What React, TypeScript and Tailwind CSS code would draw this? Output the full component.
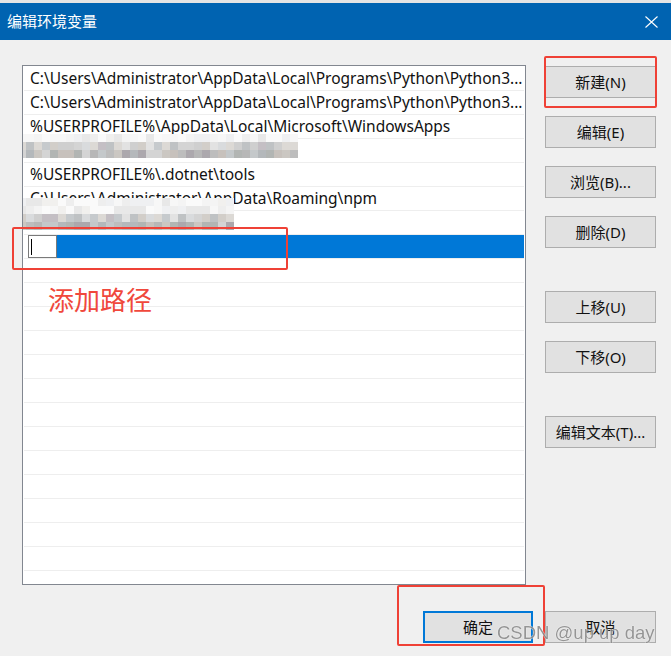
import React from "react";

const FONT = { fontFamily: '"Noto Sans", "Noto Sans CJK SC", sans-serif' };

const PALETTE_LIGHT = ["#f4f4f4", "#fafafa", "#eeeeee", "#f7f7f7", "#e8e8e8", "#f1f0ee", "#eff0f2"];
const PALETTE_MID = ["#d4d4d4", "#c6cacd", "#dcd9d5", "#cfcfcf", "#bfc2c4", "#e2e2e2", "#d2cec9", "#c4bfc4", "#d9dbdd"];
const PALETTE_DARK = ["#bdbdbd", "#b4b8bb", "#cbc7c2", "#aca8ad", "#c4c8ca", "#b7b7b7", "#d4d4d4", "#b2b5b3", "#c7c1bc"];

function rand(seed: number) {
  let s = seed;
  return () => {
    s = (s * 9301 + 49297) % 233280;
    return s / 233280;
  };
}

function Mosaic({ cols, seed, bands }: { cols: number; seed: number; bands: string[][] }) {
  const r = rand(seed);
  return (
    <div className="flex flex-col blur-[0.6px]">
      {bands.map((pal, bi) => (
        <div key={bi} className="flex h-[8px]">
          {Array.from({ length: cols }).map((_, ci) => (
            <div
              key={ci}
              className="w-[8px] h-[8px]"
              style={{ backgroundColor: pal[Math.floor(r() * pal.length)] }}
            />
          ))}
        </div>
      ))}
    </div>
  );
}

function Btn({ children, primary }: { children: React.ReactNode; primary?: boolean }) {
  return (
    <div
      className={
        primary
          ? "h-[32px] w-[110px] flex items-center justify-center bg-[#e1e1e1] border-2 border-[#0078d7] text-[15px] text-[#111]"
          : "h-[32px] w-[111px] flex items-center justify-center bg-[#e1e1e1] border border-[#adadad] text-[15px] text-[#111]"
      }
    >
      {children}
    </div>
  );
}

const rows: (string | null)[] = [
  "C:\\Users\\Administrator\\AppData\\Local\\Programs\\Python\\Python3...",
  "C:\\Users\\Administrator\\AppData\\Local\\Programs\\Python\\Python3...",
  "%USERPROFILE%\\AppData\\Local\\Microsoft\\WindowsApps",
  "",
  "%USERPROFILE%\\.dotnet\\tools",
  "C:\\Users\\Administrator\\AppData\\Roaming\\npm",
  "",
  null,
  ...Array.from({ length: 14 }).map(() => ""),
];

export default function App() {
  return (
    <div className="relative w-[671px] h-[656px] bg-[#f0f0f0] overflow-hidden" style={FONT}>
      <div className="h-[3px] bg-[#e4e4e4]" />
      <div className="h-[37px] bg-[#0063b1] flex items-center justify-between pl-[7px] pr-[12px] text-white">
        <span className="text-[15px] leading-none">编辑环境变量</span>
        <svg width="13" height="12" viewBox="0 0 13 12" className="mr-[1px]">
          <path d="M0.5 0.5 L12.5 11.5 M12.5 0.5 L0.5 11.5" stroke="#ffffff" strokeWidth="1.1" fill="none" />
        </svg>
      </div>

      <div className="flex pl-[22px] pt-[25px]">
        <div className="relative w-[504px] h-[520px] border border-[#828790] bg-white px-px pt-px overflow-hidden">
          {rows.map((t, i) =>
            t === null ? (
              <div key={i} className="h-[24px] flex border-b border-[#eeeeee]">
                <div className="w-[4px] bg-white" />
                <div className="w-[29px] h-[23px] border border-[#7a7a7a] bg-white relative">
                  <div className="absolute left-[2px] top-[3px] w-px h-[16px] bg-black" />
                </div>
                <div className="flex-1 bg-[#0078d7]" />
              </div>
            ) : (
              <div
                key={i}
                className="h-[24px] border-b border-[#eeeeee] pl-[6px] flex items-center text-[15.5px] text-[#111] whitespace-nowrap overflow-hidden"
              >
                {t}
              </div>
            )
          )}
          <div className="absolute left-[-5px] top-[68px]">
            <Mosaic cols={35} seed={7} bands={[PALETTE_LIGHT, PALETTE_MID, PALETTE_DARK]} />
          </div>
          <div className="absolute left-[-5px] top-[132px]">
            <Mosaic cols={27} seed={19} bands={[PALETTE_LIGHT, PALETTE_LIGHT, PALETTE_MID, PALETTE_DARK]} />
          </div>
        </div>

        <div className="ml-[19px] pt-px flex flex-col">
          <Btn>新建(N)</Btn>
          <div className="h-[18px]" />
          <Btn>编辑(E)</Btn>
          <div className="h-[18px]" />
          <Btn>浏览(B)...</Btn>
          <div className="h-[18px]" />
          <Btn>删除(D)</Btn>
          <div className="h-[43px]" />
          <Btn>上移(U)</Btn>
          <div className="h-[18px]" />
          <Btn>下移(O)</Btn>
          <div className="h-[43px]" />
          <Btn>编辑文本(T)...</Btn>
        </div>
      </div>

      <div className="flex justify-end gap-[12px] pr-[15px] mt-[26px]">
        <Btn primary>确定</Btn>
        <Btn>取消</Btn>
      </div>

      {/* annotations */}
      <div className="absolute left-[48px] top-[287px] text-[26px] leading-none text-[#f0483c]" style={FONT}>
        添加路径
      </div>
      <div className="absolute left-[544px] top-[56px] w-[113px] h-[52px] border-2 border-[#ef4136] rounded-[2px]" />
      <div className="absolute left-[12px] top-[227px] w-[276px] h-[43px] border-2 border-[#ef4136] rounded-[2px]" />
      <div className="absolute left-[397px] top-[585px] w-[148px] h-[61px] border-2 border-[#ef4136] rounded-[2px]" />

      <div
        className="absolute left-[497px] top-[624px] text-[18.5px] leading-none text-[#8d8d8d] opacity-90 [text-shadow:0_0_1px_#ffffff,0_0_1px_#ffffff]"
        style={{ fontFamily: '"Liberation Sans", Arial, sans-serif' }}
      >
        CSDN @up up day
      </div>
    </div>
  );
}
